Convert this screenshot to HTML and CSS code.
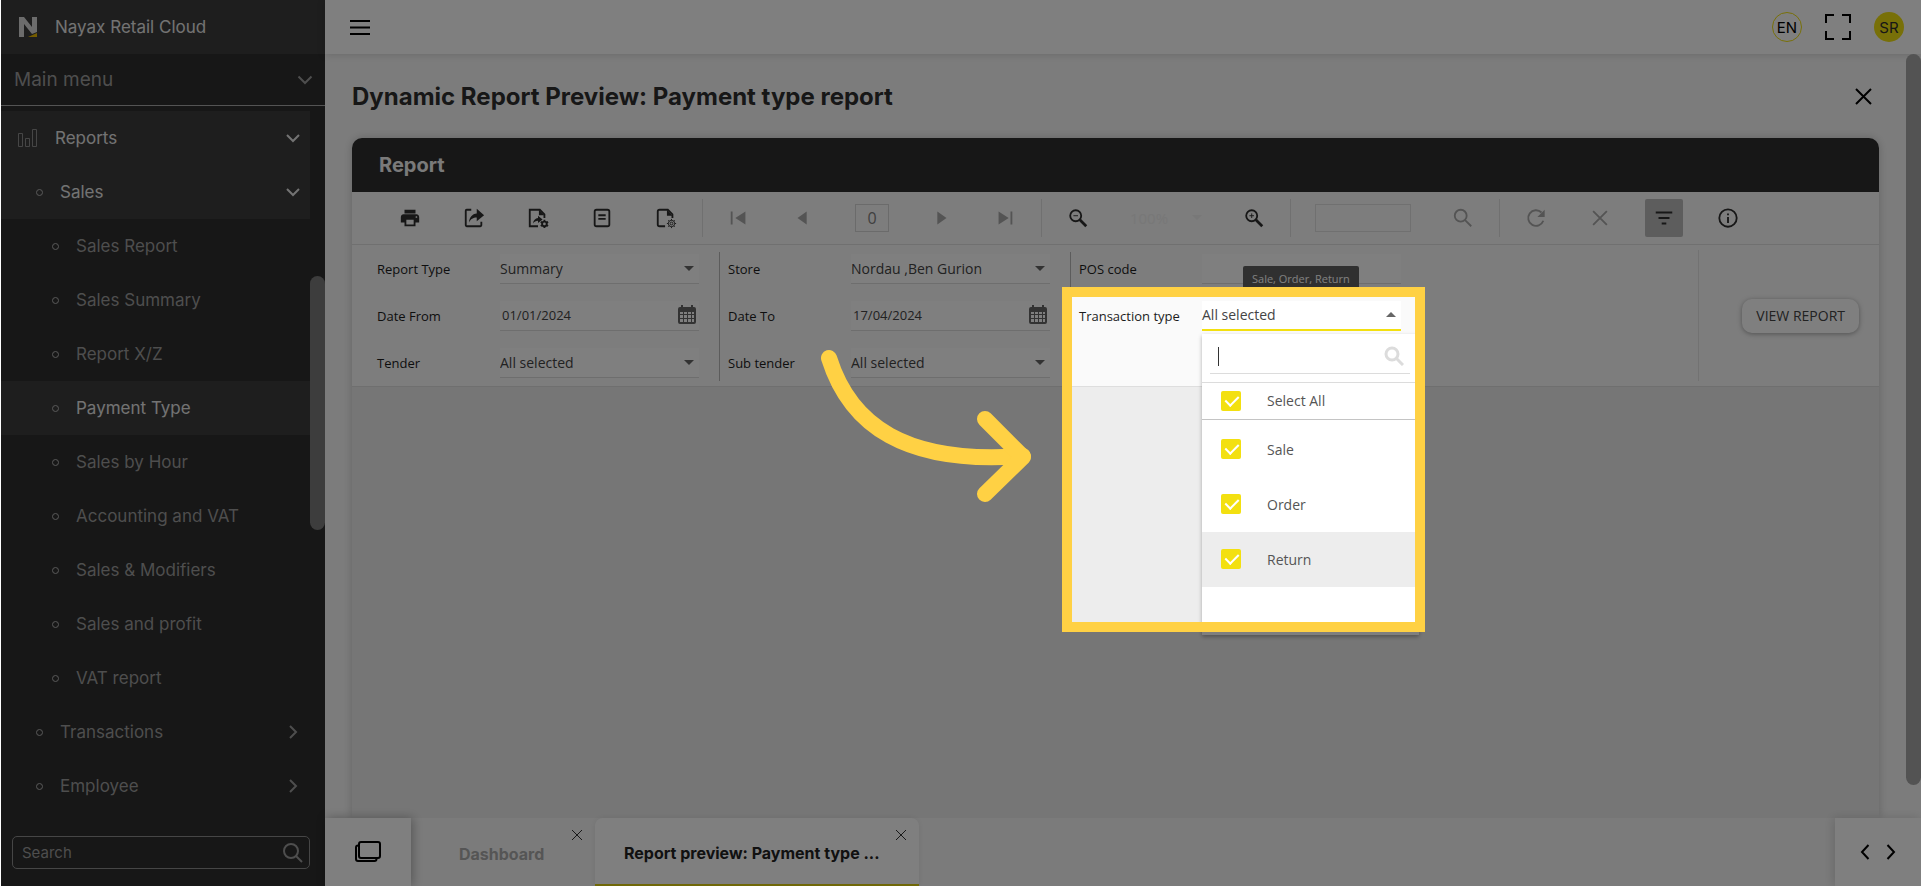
FILE: index.html
```html
<!DOCTYPE html>
<html lang="en">
  <head>
    <meta charset="UTF-8" />
    <meta name="viewport" content="width=device-width, initial-scale=1.0" />
    <title>Nayax Retail Cloud</title>
    <link rel="stylesheet" href="styles.css">
  </head>
  <body>
    <div class="app">
      <aside class="sidebar">
        <div class="brand">
          <svg class="logo" width="20" height="22" viewBox="0 0 20 22">
            <path d="M1 1h5l8 10V1h5v15l-5 2L6 8v13H1z" fill="#d8d8d8" />
            <path d="M10 21l9-4v4z" fill="#e8b800" />
          </svg>
          <span>Nayax Retail Cloud</span>
        </div>
        <button class="menu-select" type="button">
          Main menu
          <svg width="16" height="10" viewBox="0 0 16 10"><path d="M1.500 1.500L8 8l6.500-6.500" /></svg>
        </button>

        <div class="nav-scroll">
          <nav>
            <a href="#" class="nav-item top active">
              <svg class="chart" width="20" height="20" viewBox="0 0 20 20">
                <path d="M.5 5.500h4v13h-4zM7.500 10.500h4v8h-4zM14.500 1.500h4v17h-4z" />
              </svg>
              <span>Reports</span>
              <svg class="chev" width="16" height="16" viewBox="0 0 16 16"><path d="M2 5l6 6 6-6" /></svg>
            </a>
            <a href="#" class="nav-item group active">
              <i class="dot"></i><span>Sales</span>
              <svg class="chev" width="16" height="16" viewBox="0 0 16 16"><path d="M2 5l6 6 6-6" /></svg>
            </a>
            <a href="#" class="nav-item"><i class="dot"></i><span>Sales Report</span></a>
            <a href="#" class="nav-item"><i class="dot"></i><span>Sales Summary</span></a>
            <a href="#" class="nav-item"><i class="dot"></i><span>Report X/Z</span></a>
            <a href="#" class="nav-item active"><i class="dot"></i><span>Payment Type</span></a>
            <a href="#" class="nav-item"><i class="dot"></i><span>Sales by Hour</span></a>
            <a href="#" class="nav-item"><i class="dot"></i><span>Accounting and VAT</span></a>
            <a href="#" class="nav-item"><i class="dot"></i><span>Sales &amp; Modifiers</span></a>
            <a href="#" class="nav-item"><i class="dot"></i><span>Sales and profit</span></a>
            <a href="#" class="nav-item"><i class="dot"></i><span>VAT report</span></a>
            <a href="#" class="nav-item group">
              <i class="dot"></i><span>Transactions</span>
              <svg class="chev" width="16" height="16" viewBox="0 0 16 16"><path d="M5 2l6 6-6 6" /></svg>
            </a>
            <a href="#" class="nav-item group">
              <i class="dot"></i><span>Employee</span>
              <svg class="chev" width="16" height="16" viewBox="0 0 16 16"><path d="M5 2l6 6-6 6" /></svg>
            </a>
          </nav>
          <div class="nav-thumb"></div>
        </div>

        <label class="side-search">
          <input type="text" placeholder="Search" aria-label="Search" />
          <svg width="20" height="20" viewBox="0 0 20 20"><circle cx="8" cy="8" r="7" /><path d="M13 13l6 6" /></svg>
        </label>
      </aside>

      <div class="page">
        <header class="topbar">
          <button class="burger" type="button" aria-label="Menu">
            <svg width="20" height="16" viewBox="0 0 20 16"><path d="M0 2h20M0 8.500h20M0 15h20" /></svg>
          </button>
          <button class="round lang" type="button">EN</button>
          <button class="full" type="button" aria-label="Full screen">
            <svg width="26" height="26" viewBox="0 0 26 26">
              <path d="M1 9V1h8M17 1h8v8M25 17v8h-8M9 25H1v-8" />
            </svg>
          </button>
          <button class="round user" type="button">SR</button>
        </header>

        <div class="page-body">
          <main>
            <div class="title-row">
              <h1>Dynamic Report Preview: Payment type report</h1>
              <button type="button" aria-label="Close">
                <svg width="17" height="17" viewBox="0 0 17 17"><path d="M1 1l15 15M16 1L1 16" /></svg>
              </button>
            </div>

            <section class="card">
              <h2>Report</h2>

              <div class="toolbar">
                <button type="button" aria-label="Print">
                  <svg width="24" height="24" viewBox="0 0 24 24">
                    <path d="M19 8H5c-1.660 0-3 1.340-3 3v6h4v4h12v-4h4v-6c0-1.660-1.340-3-3-3zm-3 11H8v-5h8v5zm3-7c-.55 0-1-.45-1-1s.45-1 1-1 1 .45 1 1-.45 1-1 1zm-1-9H6v4h12V3z" />
                  </svg>
                </button>
                <button type="button" aria-label="Export">
                  <svg width="24" height="24" viewBox="0 0 24 24">
                    <path class="ln" d="M9 3H4q-1 0-1 1v16q0 1 1 1h15q1 0 1-1v-4" />
                    <path d="M15 2l8 7-8 6.500v-4c-4 0-6.500 1.500-8.500 5.500.5-6 3.500-9.500 8.500-10z" />
                  </svg>
                </button>
                <button type="button" aria-label="Export settings">
                  <svg width="24" height="24" viewBox="0 0 24 24">
                    <path class="ln" d="M12 21H3V3h11l5 5v4" />
                    <path d="M13 3v6h6zM12 9.500l5 4-5 4v-2.500c-2.500 0-4 1-5.500 3 .5-3.500 2.500-5.500 5.500-6z" />
                    <circle class="ln" cx="19" cy="18.500" r="2.500" />
                    <path class="ln" d="M19 14v2M19 21v2M15 16.200l2 1.100M21 19.700l2 1.100M15 20.800l2-1.100M21 17.300l2-1.100" />
                  </svg>
                </button>
                <button type="button" aria-label="Document map">
                  <svg width="24" height="24" viewBox="0 0 24 24">
                    <rect class="ln" x="4" y="3" width="16" height="18" rx="2" />
                    <path class="ln" d="M8 9h8M8 13h8" />
                  </svg>
                </button>
                <button type="button" aria-label="Page setup">
                  <svg width="24" height="24" viewBox="0 0 24 24">
                    <path class="ln" d="M11 21H5q-2 0-2-2V5q0-2 2-2h9l5 5v4" />
                    <path d="M13 3v6.500h6z" />
                    <circle class="thin" cx="18" cy="18" r="3.500" />
                    <circle class="thin" cx="18" cy="18" r="1.500" />
                    <path class="thin" d="M18 13v1.500M18 21.500V23M13 18h1.500M21.500 18H23M14.500 14.500l1 1M20.500 20.500l1 1M14.500 21.500l1-1M20.500 15.500l1-1" />
                  </svg>
                </button>
                <span class="sep"></span>
                <button type="button" aria-label="First page" disabled>
                  <svg width="24" height="24" viewBox="0 0 24 24"><path d="M3 5h2v14H3zM19 5v14l-11-7z" /></svg>
                </button>
                <button type="button" aria-label="Previous page" disabled>
                  <svg width="24" height="24" viewBox="0 0 24 24"><path d="M16 5v14L6 12z" /></svg>
                </button>
                <input class="page-no" type="text" value="0" aria-label="Page number" disabled />
                <button type="button" aria-label="Next page" disabled>
                  <svg width="24" height="24" viewBox="0 0 24 24"><path d="M8 5v14l10-7z" /></svg>
                </button>
                <button type="button" aria-label="Last page" disabled>
                  <svg width="24" height="24" viewBox="0 0 24 24"><path d="M18 5h2v14h-2zM5 5v14l11-7z" /></svg>
                </button>
                <span class="sep"></span>
                <button type="button" aria-label="Zoom out">
                  <svg width="24" height="24" viewBox="0 0 24 24">
                    <circle class="ln" cx="9.500" cy="9.500" r="6" /><path class="thin" d="M7 9.500h5" />
                    <path class="bold" d="M14 14l7 7" />
                  </svg>
                </button>
                <button class="zoom" type="button" disabled>
                  100%
                  <svg width="10" height="5" viewBox="0 0 10 5"><path d="M0 0h10L5 5z" /></svg>
                </button>
                <button type="button" aria-label="Zoom in">
                  <svg width="24" height="24" viewBox="0 0 24 24">
                    <circle class="ln" cx="9.500" cy="9.500" r="6" /><path class="thin" d="M7 9.500h5M9.500 7v5" />
                    <path class="bold" d="M14 14l7 7" />
                  </svg>
                </button>
                <span class="sep"></span>
                <input class="find" type="text" aria-label="Find in report" disabled />
                <button type="button" aria-label="Find" disabled>
                  <svg width="24" height="24" viewBox="0 0 24 24">
                    <circle class="ln" cx="9.500" cy="9.500" r="6.500" /><path class="ln" d="M14 14l7 7" />
                  </svg>
                </button>
                <span class="sep"></span>
                <button type="button" aria-label="Refresh" disabled>
                  <svg width="24" height="24" viewBox="0 0 24 24">
                    <path class="ln" d="M20 15A8.500 8.500 0 1 1 18 6" /><path d="M21.500 3v8h-8z" />
                  </svg>
                </button>
                <button type="button" aria-label="Stop" disabled>
                  <svg width="24" height="24" viewBox="0 0 24 24"><path class="ln" d="M4.500 4.500l15 15M19.500 4.500l-15 15" /></svg>
                </button>
                <button class="pressed" type="button" aria-label="Parameters" aria-pressed="true">
                  <svg width="24" height="24" viewBox="0 0 24 24"><path class="ln" d="M3 6h18M6 12h12M9.500 18h5" /></svg>
                </button>
                <button type="button" aria-label="Info">
                  <svg width="24" height="24" viewBox="0 0 24 24">
                    <circle class="ln" cx="12" cy="12" r="9.500" /><path class="ln" d="M12 11v6.500M12 7v2" />
                  </svg>
                </button>
              </div>

              <div class="params">
                <div class="param-col">
                  <div class="param">
                    <label for="reportType">Report Type</label>
                    <div class="field">
                      <select id="reportType"><option>Summary</option></select>
                      <svg class="caret" width="10" height="5" viewBox="0 0 10 5"><path d="M0 0h10L5 5z" /></svg>
                    </div>
                  </div>
                  <div class="param">
                    <label for="dateFrom">Date From</label>
                    <div class="field date">
                      <input id="dateFrom" type="text" value="01/01/2024" />
                      <svg class="cal" width="18" height="20" viewBox="0 0 18 20">
                        <path fill-rule="evenodd" d="M2 2h1V0h2v2h8V0h2v2h1q2 0 2 2v13q0 2-2 2H2q-2 0-2-2V4q0-2 2-2zM2 7v2h3V7zM6 7v2h3V7zM10 7v2h3V7zM14 7v2h2V7zM2 10v3h3v-3zM6 10v3h3v-3zM10 10v3h3v-3zM14 10v3h2v-3zM2 14v3h3v-3zM6 14v3h3v-3zM10 14v3h3v-3zM14 14v3h2v-3z" />
                      </svg>
                    </div>
                  </div>
                  <div class="param">
                    <label for="tender">Tender</label>
                    <div class="field">
                      <select id="tender"><option>All selected</option></select>
                      <svg class="caret" width="10" height="5" viewBox="0 0 10 5"><path d="M0 0h10L5 5z" /></svg>
                    </div>
                  </div>
                </div>

                <div class="param-col">
                  <div class="param">
                    <label for="store">Store</label>
                    <div class="field">
                      <select id="store"><option>Nordau ,Ben Gurion</option></select>
                      <svg class="caret" width="10" height="5" viewBox="0 0 10 5"><path d="M0 0h10L5 5z" /></svg>
                    </div>
                  </div>
                  <div class="param">
                    <label for="dateTo">Date To</label>
                    <div class="field date">
                      <input id="dateTo" type="text" value="17/04/2024" />
                      <svg class="cal" width="18" height="20" viewBox="0 0 18 20">
                        <path fill-rule="evenodd" d="M2 2h1V0h2v2h8V0h2v2h1q2 0 2 2v13q0 2-2 2H2q-2 0-2-2V4q0-2 2-2zM2 7v2h3V7zM6 7v2h3V7zM10 7v2h3V7zM14 7v2h2V7zM2 10v3h3v-3zM6 10v3h3v-3zM10 10v3h3v-3zM14 10v3h2v-3zM2 14v3h3v-3zM6 14v3h3v-3zM10 14v3h3v-3zM14 14v3h2v-3z" />
                      </svg>
                    </div>
                  </div>
                  <div class="param">
                    <label for="subTender">Sub tender</label>
                    <div class="field">
                      <select id="subTender"><option>All selected</option></select>
                      <svg class="caret" width="10" height="5" viewBox="0 0 10 5"><path d="M0 0h10L5 5z" /></svg>
                    </div>
                  </div>
                </div>

                <div class="param-col">
                  <div class="param">
                    <label for="posCode">POS code</label>
                    <div class="field"><input id="posCode" type="text" /></div>
                  </div>
                  <div class="param">
                    <label for="transType">Transaction type</label>
                    <div class="field open">
                      <button id="transType" type="button" aria-expanded="true">All selected</button>
                      <svg class="caret" width="10" height="5" viewBox="0 0 10 5"><path d="M0 5h10L5 0z" /></svg>
                      <div class="tooltip">Sale, Order, Return</div>

                      <div class="dropdown">
                        <div class="drop-search">
                          <span class="cursor"></span>
                          <input type="text" aria-label="Filter transaction types" />
                          <svg width="20" height="20" viewBox="0 0 20 20"><circle cx="8" cy="8" r="6" /><path d="M12 12l7 7" /></svg>
                        </div>
                        <label class="option all"><input type="checkbox" checked />Select All</label>
                        <div class="options">
                          <label class="option"><input type="checkbox" checked />Sale</label>
                          <label class="option"><input type="checkbox" checked />Order</label>
                          <label class="option hover"><input type="checkbox" checked />Return</label>
                        </div>
                      </div>
                    </div>
                  </div>
                </div>

                <div class="param-action">
                  <button type="button">VIEW REPORT</button>
                </div>
              </div>

              <div class="viewer"></div>
            </section>
          </main>
          <div class="page-scroll"><div class="page-thumb"></div></div>
        </div>

        <footer class="tabs">
          <button class="tab-list" type="button" aria-label="Open tabs">
            <svg width="26" height="22" viewBox="0 0 26 22">
              <rect x="4" y="1" width="21" height="16" rx="2" />
              <path d="M4 4.500H3q-2 0-2 2V18q0 2 2 2h16.500q2 0 2-2v-1" />
            </svg>
          </button>
          <div class="tab">
            <a href="#">Dashboard</a>
            <button type="button" aria-label="Close tab">
              <svg width="12" height="12" viewBox="0 0 12 12"><path d="M1 1l10 10M11 1L1 11" /></svg>
            </button>
          </div>
          <div class="tab current">
            <a href="#">Report preview: Payment type ...</a>
            <button type="button" aria-label="Close tab">
              <svg width="12" height="12" viewBox="0 0 12 12"><path d="M1 1l10 10M11 1L1 11" /></svg>
            </button>
          </div>
          <div class="tab-arrows">
            <button type="button" aria-label="Previous tab">
              <svg width="10" height="18" viewBox="0 0 10 18"><path d="M8.500 2L2 9l6.500 7" /></svg>
            </button>
            <button type="button" aria-label="Next tab">
              <svg width="10" height="18" viewBox="0 0 10 18"><path d="M1.500 2L8 9l-6.500 7" /></svg>
            </button>
          </div>
        </footer>
      </div>

      <!-- Guide step: dims the page around the highlighted field -->
      <div class="spotlight"></div>
      <svg class="guide-arrow" width="216" height="170" viewBox="0 0 216 170">
        <path d="M10 20C31 87 86 127 204 118" />
        <path d="M166 81l38 38-38 37" />
      </svg>
    </div>
  </body>
</html>
```
FILE: styles.css
```css
* {
  box-sizing: border-box;
}

body {
  margin: 0;
  background-color: #fff;
  color: #2e2e2e;
  font-family: Inter, Roboto, sans-serif;
  font-size: 17px;
}

button,
input,
select {
  font: inherit;
  color: inherit;
  background: none;
  border: none;
  border-radius: 0;
  padding: 0;
  margin: 0;
  outline: none;
}

button {
  display: flex;
  align-items: center;
  justify-content: center;
}

a {
  color: inherit;
  text-decoration: none;
}

svg {
  flex: none;
  fill: none;
  stroke: currentColor;
}

.app {
  position: relative;
  display: flex;
  height: 100vh;
  margin: 0 1px;
  overflow: hidden;
}

/* Sidebar */
.sidebar {
  display: flex;
  flex-direction: column;
  flex: none;
  width: 324px;
  background-color: #2e2e2e;
  color: #9c9c9c;
}

.brand {
  display: flex;
  align-items: center;
  gap: 17px;
  height: 54px;
  padding: 0 17px;
  background-color: #3c3c3c;
  color: #e6e6e6;
}

.logo {
  stroke: none;
}

.menu-select {
  justify-content: space-between;
  height: 52px;
  padding: 0 12px 0 13px;
  border-bottom: 1px solid #a8a8a8;
  font-size: 19px;
}

.menu-select svg {
  stroke-width: 2;
}

.nav-scroll {
  display: flex;
  flex: 1;
  min-height: 0;
  padding-top: 5px;
  overflow: hidden;
}

nav {
  flex: 1;
}

.nav-thumb {
  width: 15px;
  height: 254px;
  margin-top: 165px;
  border-radius: 8px;
  background-color: #7a7a7a;
}

.nav-item {
  display: flex;
  align-items: center;
  height: 54px;
  padding: 0 9px 0 51px;
}

.nav-item span {
  flex: 1;
}

.nav-item.active {
  background-color: #3c3c3c;
  color: #e6e6e6;
}

.nav-item.top {
  padding-left: 17px;
}

.nav-item.group {
  padding-left: 35px;
}

.chart {
  margin-right: 17px;
  color: #8c8c8c;
}

.dot {
  width: 7px;
  height: 7px;
  margin-right: 17px;
  border: 1px solid #b4b4b4;
  border-radius: 50%;
}

.chev {
  width: 16px;
  stroke-width: 2;
}

.side-search {
  display: flex;
  align-items: center;
  height: 33px;
  margin: 16px 15px 17px 11px;
  padding: 0 6px 0 9px;
  border: 1px solid #8c8c8c;
  border-radius: 5px;
}

.side-search input {
  flex: 1;
  min-width: 0;
  font-size: 15px;
}

.side-search input::placeholder {
  color: #9c9c9c;
}

.side-search svg {
  stroke-width: 2;
}

/* Top bar */
.page {
  display: flex;
  flex-direction: column;
  flex: 1;
  min-width: 0;
  background-color: #f9f9f9;
}

.topbar {
  display: flex;
  align-items: center;
  height: 54px;
  padding: 0 17px 0 25px;
  background-color: #fff;
  box-shadow: 0 1px 8px rgba(0, 0, 0, 0.15);
  color: #000;
}

.burger {
  margin-right: auto;
  stroke-width: 2;
}

.full {
  width: 26px;
  margin: 0 23px;
  stroke-width: 2;
}

.round {
  width: 30px;
  height: 30px;
  border-radius: 50%;
  font-size: 15px;
}

.lang {
  border: 1px solid #f0e010;
}

.user {
  background-color: #f0e010;
  color: #2e2e2e;
}

/* Content */
.page-body {
  display: flex;
  flex: 1;
  min-height: 0;
}

main {
  display: flex;
  flex-direction: column;
  flex: 1;
  min-width: 0;
  padding: 0 27px;
}

.page-scroll {
  width: 15px;
}

.page-thumb {
  height: 731px;
  border-radius: 8px;
  background-color: #a6a6a6;
}

.title-row {
  display: flex;
  align-items: center;
  justify-content: space-between;
  height: 84px;
}

.title-row button {
  margin-right: 7px;
  color: #000;
  stroke-width: 2;
}

h1 {
  margin: 0;
  font-size: 24px;
  font-weight: 700;
}

.card {
  display: flex;
  flex-direction: column;
  flex: 1;
  min-height: 0;
  border-radius: 10px 10px 0 0;
  background-color: #fafafa;
  box-shadow: 0 0 10px rgba(0, 0, 0, 0.2);
}

h2 {
  margin: 0;
  padding: 0 27px;
  border-radius: 10px 10px 0 0;
  background-color: #2e2e2e;
  color: #f5f5f5;
  font-size: 20px;
  font-weight: 700;
  line-height: 54px;
}

.toolbar {
  display: flex;
  align-items: center;
  height: 53px;
  padding: 0 0 1px 26px;
  border-bottom: 1px solid #e0e0e0;
  font-family: "Open Sans", "Noto Sans", sans-serif;
  font-size: 16px;
}

.toolbar button {
  width: 38px;
  height: 38px;
  margin: 0 13px;
  border-radius: 2px;
}

.toolbar svg {
  width: 22px;
  fill: currentColor;
  stroke: none;
}

.toolbar .ln,
.toolbar .thin,
.toolbar .bold {
  fill: none;
  stroke: currentColor;
  stroke-width: 2;
}

.toolbar .thin {
  stroke-width: 1;
}

.toolbar .bold {
  stroke-width: 3;
}

.toolbar button:disabled {
  color: #a8a8a8;
}

.toolbar .pressed {
  background-color: #bababa;
}

.sep {
  width: 1px;
  height: 38px;
  margin: 0 4px;
  background-color: #e0e0e0;
}

.page-no {
  width: 34px;
  height: 28px;
  margin: 0 20px;
  border: 1px solid #d6d6d6;
  color: #808080;
  text-align: center;
}

.toolbar .zoom {
  gap: 24px;
  width: 86px;
  font-size: 15px;
}

.toolbar .zoom:disabled {
  color: #f0f0f0;
}

.toolbar .zoom svg {
  width: 10px;
}

.find {
  width: 96px;
  height: 28px;
  margin: 0 20px;
  border: 1px solid #e0e0e0;
}

/* Report parameters */
.params {
  display: flex;
  padding: 0 20px 0 16px;
  border-bottom: 1px solid #dedede;
  font-family: "Open Sans", "Noto Sans", sans-serif;
  font-size: 13px;
}

.param-col {
  display: flex;
  flex-direction: column;
  gap: 14px;
  width: 351px;
  margin: 7px 0 5px;
  padding: 0 20px 2px 8px;
  border-left: 1px solid #b8b8b8;
}

.param-col:first-child {
  border-left-color: transparent;
}

.param {
  display: flex;
  align-items: center;
  justify-content: space-between;
  height: 33px;
  color: #1c1c1c;
}

.field {
  position: relative;
  display: flex;
  align-items: center;
  width: 199px;
  height: 30px;
  border-bottom: 1px solid #dcdcdc;
  background-color: #fff;
  color: #444;
  font-size: 14px;
}

.field select,
.field > input,
.field > button {
  flex: 1;
  justify-content: flex-start;
  min-width: 0;
  height: 100%;
  appearance: none;
}

.date {
  font-size: 13px;
}

.field.date > input {
  padding-left: 2px;
}

.caret {
  margin-right: 5px;
  fill: #666;
  stroke: none;
}

.cal {
  margin-right: 3px;
  fill: #666;
  stroke: none;
}

.field.open {
  border-bottom: 2px solid #f3e010;
}

.tooltip {
  position: absolute;
  left: 41px;
  bottom: 40px;
  padding: 3px 9px 0;
  border-radius: 2px;
  background-color: #606060;
  color: #fff;
  font-size: 11px;
  line-height: 20px;
  white-space: nowrap;
}

.dropdown {
  position: absolute;
  top: 33px;
  left: 0;
  width: 217px;
  background-color: #fff;
  box-shadow: 0 2px 4px rgba(0, 0, 0, 0.3);
}

.drop-search {
  display: flex;
  align-items: center;
  height: 34px;
  margin: 6px 9px 8px 8px;
  padding: 0 6px 0 8px;
  border-bottom: 1px solid #dcdcdc;
  color: #dcdcdc;
}

.drop-search svg {
  stroke-width: 3;
}

.cursor {
  width: 1px;
  height: 19px;
  background-color: #333;
}

.drop-search input {
  flex: 1;
  min-width: 0;
}

.option {
  display: flex;
  align-items: center;
  gap: 26px;
  height: 55px;
  padding-left: 19px;
  color: #555;
}

.option.all {
  height: 38px;
  border-top: 1px solid #dcdcdc;
  border-bottom: 1px solid #c4c4c4;
}

.option.hover {
  background-color: #ededed;
}

.options {
  padding: 2px 0 48px;
}

.option input {
  width: 20px;
  height: 20px;
  border-radius: 2px;
  background-color: #f3e010;
  appearance: none;
}

.option input:checked::before {
  content: "";
  display: block;
  width: 6px;
  height: 11px;
  margin: 2px 0 0 7px;
  border: solid #fff;
  border-width: 0 2px 2px 0;
  transform: rotate(45deg);
}

.param-action {
  display: flex;
  align-items: center;
  margin: 5px 0 5px auto;
  padding-left: 43px;
  border-left: 1px solid #e4e4e4;
}

.param-action button {
  height: 34px;
  padding: 0 14px;
  border-radius: 10px;
  background-color: #fff;
  box-shadow: 0 1px 5px rgba(0, 0, 0, 0.35);
  color: #444;
  font-size: 14px;
}

.viewer {
  flex: 1;
  background-color: #ededed;
}

/* Bottom tabs */
.tabs {
  position: relative;
  display: flex;
  height: 68px;
  background-color: #f7f7f7;
}

.tab-list {
  width: 86px;
  background-color: #fff;
  box-shadow: 2px 0 10px rgba(0, 0, 0, 0.3);
  color: #000;
  stroke-width: 2;
}

.tab {
  position: relative;
  display: flex;
  align-items: center;
  width: 184px;
  padding: 4px 28px 0 48px;
  color: #ababab;
  font-weight: 700;
  font-size: 16px;
}

.tab button {
  position: absolute;
  top: 11px;
  right: 12px;
  color: #333;
}

.tab.current {
  width: 324px;
  padding-left: 29px;
  border-bottom: 2px solid #e0d010;
  border-radius: 8px 8px 0 0;
  background-color: #fff;
  box-shadow: 0 0 6px rgba(0, 0, 0, 0.08);
  color: #222;
  white-space: nowrap;
}

.tab-arrows {
  display: flex;
  align-items: center;
  justify-content: center;
  gap: 16px;
  width: 86px;
  margin-left: auto;
  background-color: #fff;
  box-shadow: -2px 0 10px rgba(0, 0, 0, 0.15);
  color: #000;
  stroke-width: 2;
}

/* Guide */
.spotlight {
  position: absolute;
  top: 287px;
  left: 1061px;
  width: 363px;
  height: 345px;
  border: 10px solid #ffd144;
  box-shadow: 0 0 0 2000px rgba(0, 0, 0, 0.5);
}

.guide-arrow {
  position: absolute;
  top: 338px;
  left: 818px;
  stroke: #ffd144;
  stroke-width: 16;
  stroke-linecap: round;
  stroke-linejoin: round;
}
```
